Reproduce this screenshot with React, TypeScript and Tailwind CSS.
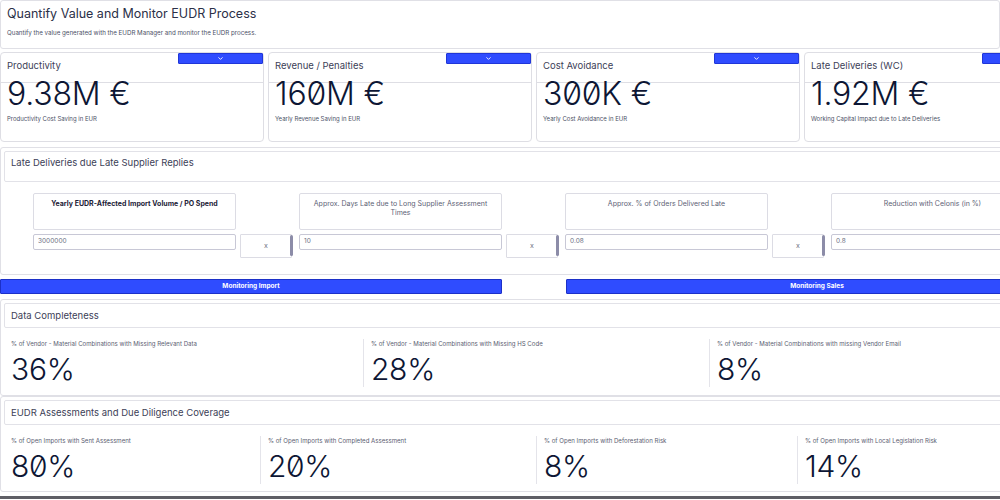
import React from "react";
import { FiChevronDown } from "react-icons/fi";

const kpis = [
  { title: "Productivity", value: "9.38M €", sub: "Productivity Cost Saving in EUR" },
  { title: "Revenue / Penalties", value: "160M €", sub: "Yearly Revenue Saving in EUR" },
  { title: "Cost Avoidance", value: "300K €", sub: "Yearly Cost Avoidance in EUR" },
  { title: "Late Deliveries (WC)", value: "1.92M €", sub: "Working Capital Impact due to Late Deliveries" },
];

const inputs = [
  { label: "Yearly EUDR-Affected Import Volume / PO Spend", value: "3000000", bold: true },
  { label: "Approx. Days Late due to Long Supplier Assessment Times", value: "10" },
  { label: "Approx. % of Orders Delivered Late", value: "0.08" },
  { label: "Reduction with Celonis (in %)", value: "0.8" },
];

const completeness = [
  { label: "% of Vendor - Material Combinations with Missing Relevant Data", value: "36%", w: "w-[359px]" },
  { label: "% of Vendor - Material Combinations with Missing HS Code", value: "28%", w: "w-[346px]" },
  { label: "% of Vendor - Material Combinations with missing Vendor Email", value: "8%", w: "flex-1" },
];

const coverage = [
  { label: "% of Open Imports with Sent Assessment", value: "80%", w: "w-[256px]" },
  { label: "% of Open Imports with Completed Assessment", value: "20%", w: "w-[276px]" },
  { label: "% of Open Imports with Deforestation Risk", value: "8%", w: "w-[261px]" },
  { label: "% of Open Imports with Local Legislation Risk", value: "14%", w: "flex-1" },
];

const SectionHeader: React.FC<{ title: string; tall?: boolean }> = ({ title, tall }) => (
  <div
    className={`mx-[3px] mt-[3px] border border-[#e2e2e8] rounded-[2px] px-[6px] ${
      tall ? "h-[31px] pt-[6px]" : "h-[25px] flex items-center"
    }`}
  >
    <span className="block text-[9.5px] leading-none text-[#3c4157]">{title}</span>
  </div>
);

const StatBlock: React.FC<{ label: string; value: string; w: string; first?: boolean }> = ({ label, value, w, first }) => (
  <div className={`${w} ${first ? "" : "border-l border-[#e4e4ea]"} pl-[7px] h-[48px]`}>
    <div className="text-[6.1px] leading-none text-[#5b6072] pt-[2px]">{label}</div>
    <div className="text-[30px] font-light leading-none text-[#0d1634] slashed-zero mt-[7px] tracking-[-0.3px]">{value}</div>
  </div>
);

const App: React.FC = () => {
  return (
    <div className="w-[1000px] h-[500px] overflow-hidden bg-white" style={{ fontFamily: "Inter, 'Noto Sans', sans-serif" }}>
      <div className="w-[1072px] flex flex-col">
        {/* Title */}
        <div className="h-[49px] w-[1000px] border border-[#e0e0e6] rounded-[3px] px-[6px] pt-[7px]">
          <h1 className="text-[12.5px] leading-none text-[#2b3048]">Quantify Value and Monitor EUDR Process</h1>
          <p className="text-[6.2px] leading-none text-[#4b5066] mt-[9px]">Quantify the value generated with the EUDR Manager and monitor the EUDR process.</p>
        </div>

        {/* KPI cards */}
        <div className="flex gap-[4px] mt-[3px]">
          {kpis.map((k) => (
            <div key={k.title} className="relative w-[264px] h-[90px] border border-[#dedee4] rounded-[4px]">
              <div className="h-[30px] border-b border-[#dedee4] px-[6px] pt-[8px]">
                <span className="block text-[9.5px] leading-none text-[#3c4157]">{k.title}</span>
              </div>
              <button className="absolute right-0 top-0 w-[85px] h-[11px] bg-[#2f4cff] border border-[#2036d8] rounded-[1px] flex items-center justify-center">
                <FiChevronDown className="w-[7px] h-[7px] text-white" strokeWidth={3} />
              </button>
              <div className="px-[6px] -mt-[5px] text-[32px] font-light leading-none text-[#0d1634] slashed-zero tracking-[-0.2px]">{k.value}</div>
              <div className="px-[6px] mt-[6px] text-[6px] leading-none text-[#4b5066]">{k.sub}</div>
            </div>
          ))}
        </div>

        {/* Late deliveries */}
        <div className="mt-[5px] h-[128px] border border-[#e0e0e6] rounded-[3px]">
          <SectionHeader title="Late Deliveries due Late Supplier Replies" tall />
          <div className="flex pl-[32px] mt-[11px]">
            {inputs.map((inp) => (
              <div key={inp.label} className="flex items-start">
                <div className="w-[203px]">
                  <div className="h-[37px] border border-[#dcdce4] rounded-[2px] px-[8px] pt-[5px] text-center">
                    <span className={`text-[7px] leading-[9px] block ${inp.bold ? "font-bold text-[#1c2136]" : "text-[#5d6275]"}`}>{inp.label}</span>
                  </div>
                  <div className="mt-[4px] h-[16px] border border-[#c8c8d6] rounded-[2px] px-[4px] flex items-center text-[6.5px] text-[#6b7082]">
                    {inp.value}
                  </div>
                </div>
                <div className="relative ml-[4px] mr-[7px] mt-[41px] w-[52px] h-[24px] border border-[#dcdce4] rounded-[1px] flex items-center justify-center">
                  <span className="text-[7px] text-[#6b7082]">x</span>
                  <div className="absolute -right-[2px] top-0 w-[3px] h-[21px] rounded-full bg-[#8c8ca8]" />
                </div>
              </div>
            ))}
          </div>
        </div>

        {/* Buttons */}
        <div className="flex mt-[4px] gap-[64px]">
          <button className="w-[502px] h-[15px] bg-[#2f4cff] border border-[#1c30c8] rounded-[1px] text-white text-[6.5px] font-bold">Monitoring Import</button>
          <button className="w-[502px] h-[15px] bg-[#2f4cff] border border-[#1c30c8] rounded-[1px] text-white text-[6.5px] font-bold">Monitoring Sales</button>
        </div>

        {/* Data completeness */}
        <div className="mt-[5px] h-[97px] border border-[#e0e0e6] rounded-[3px]">
          <SectionHeader title="Data Completeness" />
          <div className="flex mt-[11px] pl-[3px]">
            {completeness.map((c, i) => (
              <StatBlock key={c.label} {...c} first={i === 0} />
            ))}
          </div>
        </div>

        {/* Coverage */}
        <div className="h-[96px] border border-[#e0e0e6] rounded-[3px]">
          <SectionHeader title="EUDR Assessments and Due Diligence Coverage" />
          <div className="flex mt-[11px] pl-[3px]">
            {coverage.map((c, i) => (
              <StatBlock key={c.label} {...c} first={i === 0} />
            ))}
          </div>
        </div>

        <div className="mt-[4px] h-[3px] bg-[#5f5f66]" />
      </div>
    </div>
  );
};

export default App;
